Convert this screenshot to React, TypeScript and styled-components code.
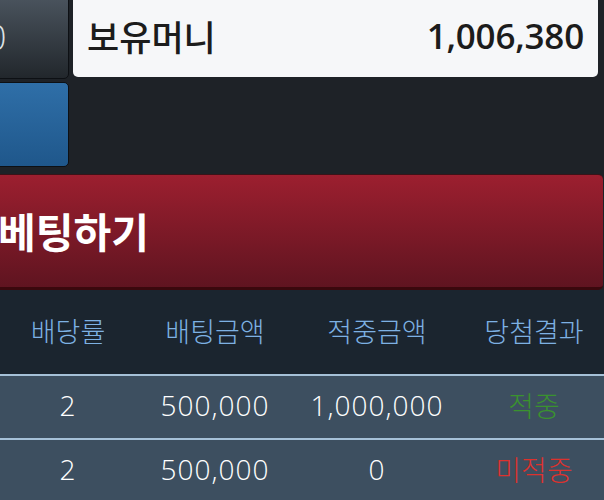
import React from "react";
import styled, { createGlobalStyle } from "styled-components";

const Global = createGlobalStyle`
  html, body {
    margin: 0;
    padding: 0;
    background: #1e2227;
    overflow: hidden;
    font-family: "Open Sans", "Noto Sans CJK KR", sans-serif;
  }
`;

const Page = styled.div`
  width: 644px;
  margin-top: -6px;
  margin-left: -40px;
  display: flex;
  flex-direction: column;
`;

const Top = styled.div`
  display: grid;
  grid-template-columns: 109px 1fr;
  grid-template-rows: 85px 85px;
  column-gap: 4px;
  row-gap: 3px;
  padding-right: 6px;
`;

const SideButton = styled.div<{ $variant: "dark" | "blue" }>`
  box-sizing: border-box;
  border: 1px solid #0d1014;
  border-radius: 5px;
  background: ${(p) =>
    p.$variant === "dark"
      ? "linear-gradient(to bottom, #4b555f, #22272c)"
      : "linear-gradient(to bottom, #2f6fa8, #1f578b)"};
  color: #dfe3e6;
  font-size: 34px;
  font-weight: 300;
  display: flex;
  align-items: center;
  padding-left: 26px;
`;

const MoneyBox = styled.div`
  box-sizing: border-box;
  height: 83px;
  background: #f6f7f9;
  border-radius: 0 0 5px 5px;
  display: flex;
  align-items: center;
  justify-content: space-between;
  padding: 0 14px 0 14px;
  color: #1c1c1c;
  font-size: 35px;
  font-weight: 500;
`;

const Label = styled.span`
  font-family: "Noto Sans CJK KR", sans-serif;
  font-size: 35px;
`;

const Amount = styled.span`
  font-weight: 600;
  letter-spacing: -0.2px;
`;

const BetButton = styled.div`
  box-sizing: border-box;
  margin-top: 7px;
  margin-right: 1px;
  height: 116px;
  border-radius: 5px;
  border-top: 1px solid #3b1318;
  border-bottom: 3px solid #3a080d;
  background: linear-gradient(to bottom, #9c1f2f, #5f1420);
  color: #ffffff;
  font-family: "Noto Sans CJK KR", sans-serif;
  font-size: 41px;
  font-weight: 700;
  display: flex;
  align-items: center;
  padding-left: 38px;
  padding-bottom: 2px;
`;

const Table = styled.div`
  margin-left: 40px;
  width: 608px;
  display: flex;
  flex-direction: column;
`;

const Row = styled.div<{ $head?: boolean }>`
  box-sizing: border-box;
  display: grid;
  grid-template-columns: 136px 158px 166px 1fr;
  align-items: center;
  height: ${(p) => (p.$head ? "84px" : "64px")};
  padding-bottom: 4px;
  background: ${(p) => (p.$head ? "#1b252f" : "#3d4f60")};
  border-top: ${(p) => (p.$head ? "none" : "2px solid #a6c1d8")};
  color: ${(p) => (p.$head ? "#7db1e3" : "#ffffff")};
  font-size: 28px;
  font-weight: 300;
  letter-spacing: ${(p) => (p.$head ? "0" : "1px")};
`;

const Cell = styled.div<{ $tone?: "win" | "lose" }>`
  text-align: center;
  color: ${(p) =>
    p.$tone === "win" ? "#3a922f" : p.$tone === "lose" ? "#dc322e" : "inherit"};
`;

const HangulText = styled.span<{ $size?: number }>`
  font-family: "Noto Sans CJK KR", sans-serif;
  font-weight: 300;
  font-size: ${(p) => p.$size ?? 27}px;
  letter-spacing: 0;
`;

const rows = [
  { odds: "2", bet: "500,000", win: "1,000,000", result: "적중", tone: "win" as const },
  { odds: "2", bet: "500,000", win: "0", result: "미적중", tone: "lose" as const },
];

const heads = ["배당률", "배팅금액", "적중금액", "당첨결과"];

export default function App() {
  return (
    <>
      <Global />
      <Page>
        <Top>
          <SideButton $variant="dark">0</SideButton>
          <MoneyBox>
            <Label>보유머니</Label>
            <Amount>1,006,380</Amount>
          </MoneyBox>
          <SideButton $variant="blue" />
        </Top>
        <BetButton>베팅하기</BetButton>
        <Table>
          <Row $head>
            {heads.map((h) => (
              <Cell key={h}>
                <HangulText>{h}</HangulText>
              </Cell>
            ))}
          </Row>
          {rows.map((r, i) => (
            <Row key={i}>
              <Cell>{r.odds}</Cell>
              <Cell>{r.bet}</Cell>
              <Cell>{r.win}</Cell>
              <Cell $tone={r.tone}>
                <HangulText $size={28}>{r.result}</HangulText>
              </Cell>
            </Row>
          ))}
        </Table>
      </Page>
    </>
  );
}
